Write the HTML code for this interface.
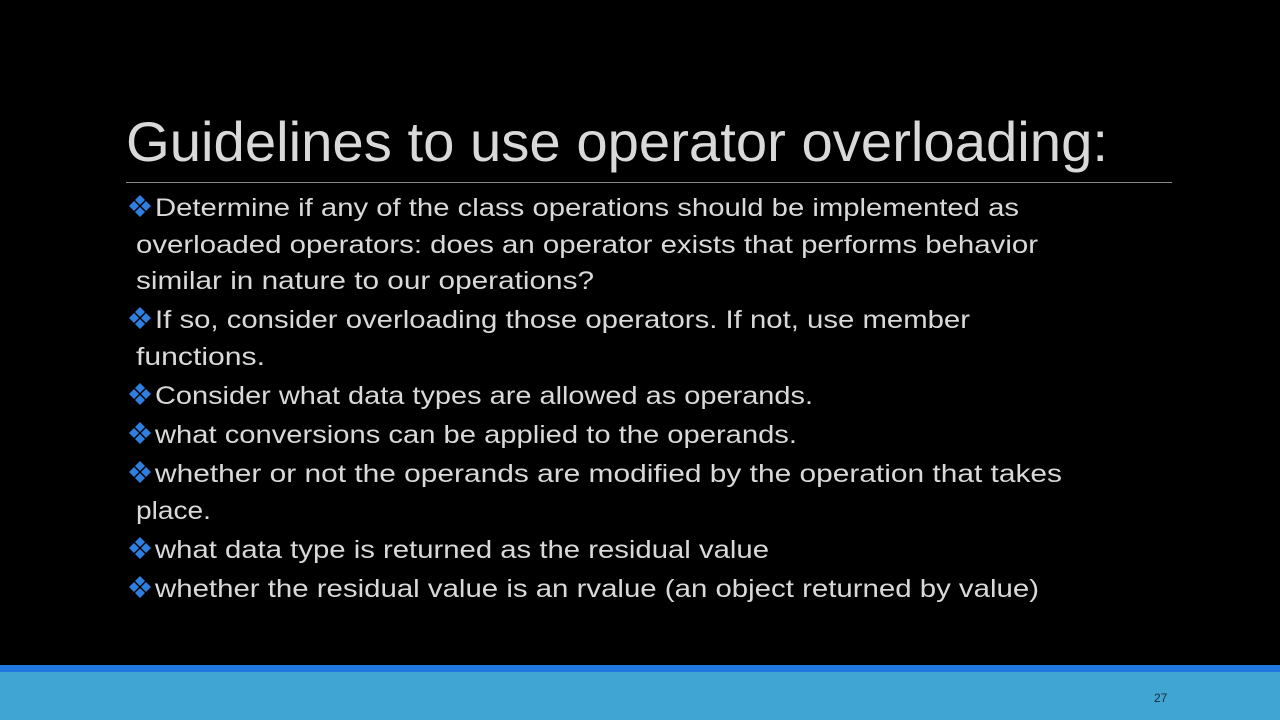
<!DOCTYPE html>
<html><head><meta charset="utf-8"><style>
html,body{margin:0;padding:0;background:#000;width:1280px;height:720px;overflow:hidden}
svg{display:block}
text{font-family:"Liberation Sans",sans-serif;fill:#d9d9d9}
</style></head><body>
<svg width="1280" height="720" viewBox="0 0 1280 720">
<rect width="1280" height="720" fill="#000"/>
<text x="126" y="161" font-size="56" textLength="982" lengthAdjust="spacingAndGlyphs" fill="#d0d0d0">Guidelines to use operator overloading:</text>
<rect x="126" y="182" width="1046" height="1" fill="#8a8a8a"/>
<defs><g id="b" fill="#2f7fdf">
<path d="M11 0 L16 5 L11 10 L6 5Z"/><path d="M5 6 L10 11 L5 16 L0 11Z"/><path d="M17 6 L22 11 L17 16 L12 11Z"/><path d="M11 12 L16 17 L11 22 L6 17Z"/>
</g></defs>
<g font-size="25">
<use href="#b" x="129" y="195"/>
<text x="155" y="216" textLength="864" lengthAdjust="spacingAndGlyphs">Determine if any of the class operations should be implemented as</text>
<text x="136" y="253" textLength="902" lengthAdjust="spacingAndGlyphs">overloaded operators: does an operator exists that performs behavior</text>
<text x="136" y="289" textLength="458" lengthAdjust="spacingAndGlyphs">similar in nature to our operations?</text>
<use href="#b" x="129" y="307"/>
<text x="155" y="328" textLength="815" lengthAdjust="spacingAndGlyphs">If so, consider overloading those operators. If not, use member</text>
<text x="136" y="365" textLength="129" lengthAdjust="spacingAndGlyphs">functions.</text>
<use href="#b" x="129" y="383"/>
<text x="155" y="404" textLength="658" lengthAdjust="spacingAndGlyphs">Consider what data types are allowed as operands.</text>
<use href="#b" x="129" y="422"/>
<text x="155" y="443" textLength="642" lengthAdjust="spacingAndGlyphs">what conversions can be applied to the operands.</text>
<use href="#b" x="129" y="461"/>
<text x="155" y="482" textLength="907" lengthAdjust="spacingAndGlyphs">whether or not the operands are modified by the operation that takes</text>
<text x="136" y="519" textLength="75" lengthAdjust="spacingAndGlyphs">place.</text>
<use href="#b" x="129" y="537"/>
<text x="155" y="558" textLength="614" lengthAdjust="spacingAndGlyphs">what data type is returned as the residual value</text>
<use href="#b" x="129" y="576"/>
<text x="155" y="597" textLength="884" lengthAdjust="spacingAndGlyphs">whether the residual value is an rvalue (an object returned by value)</text>
</g>
<rect x="0" y="665" width="1280" height="7" fill="#1f78e0"/>
<rect x="0" y="672" width="1280" height="48" fill="#41a5d4"/>
<text x="1154" y="702" font-size="12" style="fill:#1a2a3a">27</text>
</svg>
</body></html>
